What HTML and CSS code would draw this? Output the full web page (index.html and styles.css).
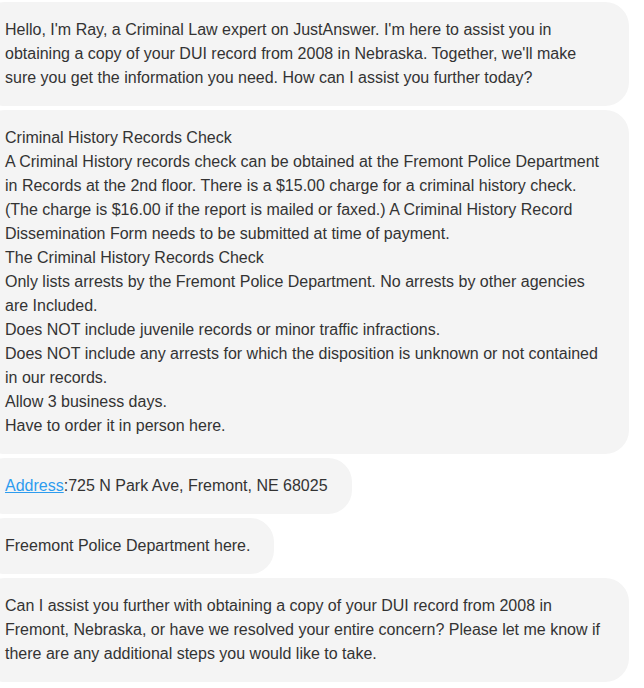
FILE: index.html
```html
<!DOCTYPE html>
<html lang="en">
<head>
<meta charset="utf-8">
<title>Chat</title>
<link rel="stylesheet" href="styles.css">
</head>
<body>
<div class="thread">
  <div class="bubble">Hello, I'm Ray, a Criminal Law expert on JustAnswer. I'm here to assist you in obtaining a copy of your DUI record from 2008 in Nebraska. Together, we'll make sure you get the information you need. How can I assist you further today?</div>
  <div class="bubble">Criminal History Records Check<br>A Criminal History records check can be obtained at the Fremont Police Department in Records at the 2nd floor. There is a $15.00 charge for a criminal history check. (The charge is $16.00 if the report is mailed or faxed.) A Criminal History Record Dissemination Form needs to be submitted at time of payment.<br>The Criminal History Records Check<br>Only lists arrests by the Fremont Police Department. No arrests by other agencies are Included.<br>Does NOT include juvenile records or minor traffic infractions.<br>Does NOT include any arrests for which the disposition is unknown or not contained in our records.<br>Allow 3 business days.<br>Have to order it in person here.</div>
  <div class="bubble"><a class="link" href="#">Address</a>:725 N Park Ave, Fremont, NE 68025</div>
  <div class="bubble">Freemont Police Department here.</div>
  <div class="bubble">Can I assist you further with obtaining a copy of your DUI record from 2008 in Fremont, Nebraska, or have we resolved your entire concern? Please let me know if there are any additional steps you would like to take.</div>
</div>
</body>
</html>
```
FILE: styles.css
```css
html, body {
  margin: 0;
  padding: 0;
  background: #ffffff;
  overflow: hidden;
}
.thread {
  display: flex;
  flex-direction: column;
  align-items: flex-start;
  gap: 4px;
  padding-top: 2px;
  margin-left: -19px;
  width: 648px;
}
.bubble {
  box-sizing: border-box;
  max-width: 648px;
  background: #f4f4f4;
  border-radius: 24px;
  padding: 16px 24px;
  font-family: "Liberation Sans", Arial, sans-serif;
  font-size: 16px;
  line-height: 24px;
  color: #333333;
}
.link {
  color: #2d9cef;
  text-decoration: underline;
}
```
